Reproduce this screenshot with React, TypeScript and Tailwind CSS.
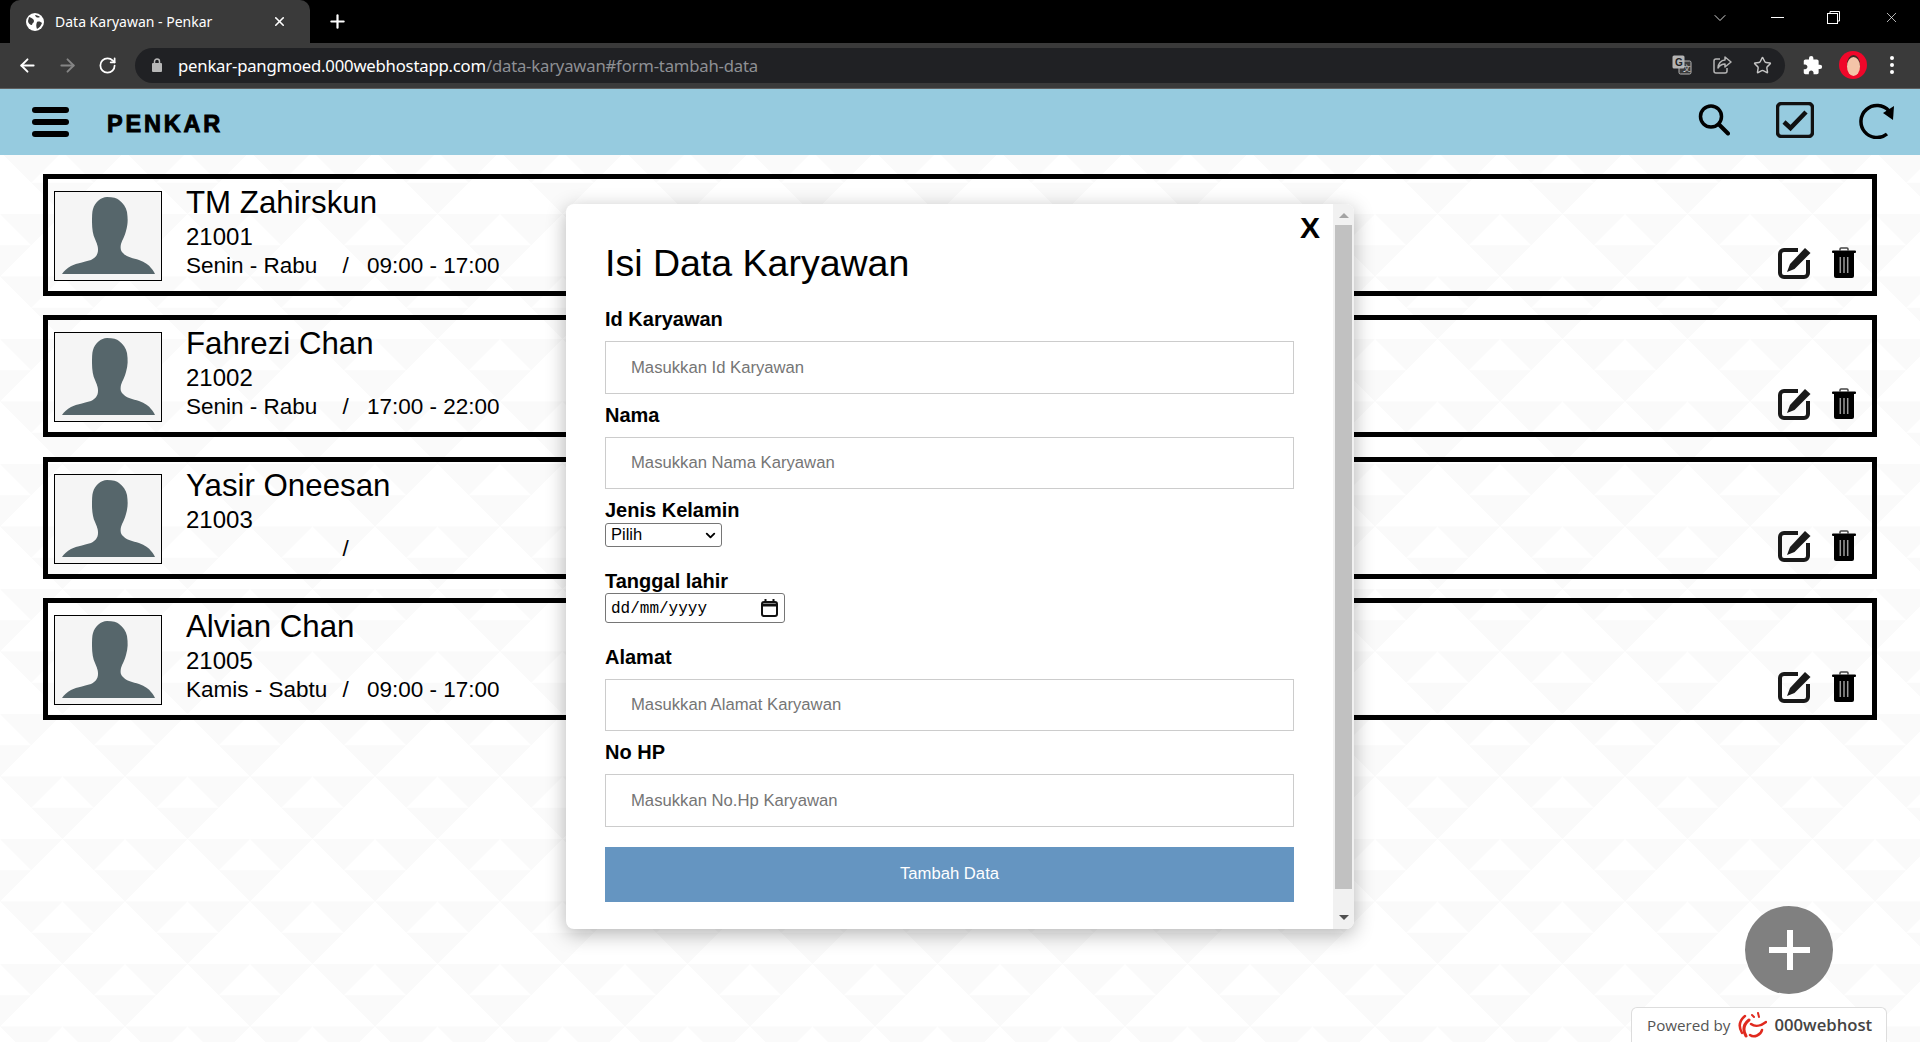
import { FC } from "react";
import { ArrowLeft, ArrowRight, ChevronDown, Plus, RotateCw, Star, X } from "lucide-react";
import { MdExtension } from "react-icons/md";

const employees = [
  { name: "TM Zahirskun", id: "21001", days: "Senin - Rabu", time: "09:00 - 17:00" },
  { name: "Fahrezi Chan", id: "21002", days: "Senin - Rabu", time: "17:00 - 22:00" },
  { name: "Yasir Oneesan", id: "21003", days: "", time: "" },
  { name: "Alvian Chan", id: "21005", days: "Kamis - Sabtu", time: "09:00 - 17:00" },
];

// background tile of pale triangles
const PagePattern = () => (
  <svg className="absolute inset-0 h-full w-full" aria-hidden="true">
    <defs>
      <pattern id="tri" x="0" y="89" width="125" height="125" patternUnits="userSpaceOnUse">
        <path
          fill="#fafafa"
          d="M0 62.5H62.5L31.25 93.75ZM62.5 62.5H125L93.75 93.75ZM31.25 93.75H93.75L62.5 125ZM0 0H62.5L31.25 31.25ZM62.5 0H125L93.75 31.25ZM93.75 31.25H156.25L125 62.5ZM-31.25 31.25H31.25L0 62.5Z"
        />
      </pattern>
    </defs>
    <rect width="100%" height="100%" fill="url(#tri)" />
  </svg>
);

const Silhouette = () => (
  <svg viewBox="0 0 106 88" className="h-full w-full">
    <path
      fill="#56666b"
      d="M52 5C58 5 62 6 64 8C68 11 71 15 72 20C73 27 73 32 71 39C70 44 67 48 66 52C65 57 66 59 68 61C71 65 78 66 84 68C90 70 94 73 96 76C98 78 99 80 100 82H7C9 79 12 76 16 74C22 71 30 70 36 68C40 66 43 63 43 58C43 54 42 52 40 47C38 43 37 37 37 30C37 25 37 20 38 17C40 10 46 5 52 5Z"
    />
  </svg>
);

const EditIcon = () => (
  <svg width="33" height="32" viewBox="0 0 33 32">
    <path
      d="M20 3H6A4 4 0 0 0 2 7V26A4 4 0 0 0 6 30H26A4 4 0 0 0 30 26V13"
      fill="none"
      stroke="#1a1a1a"
      strokeWidth="4"
    />
    <path d="M27 1L32.500 6L16.500 22L9 25L12 17Z" fill="#1a1a1a" />
  </svg>
);

const TrashIcon = () => (
  <svg width="24" height="32" viewBox="0 0 24 32">
    <path d="M8 3.500V2A1 1 0 0 1 9 1H15A1 1 0 0 1 16 2V3.500" fill="none" stroke="#444" strokeWidth="1.500" />
    <rect x="0" y="3.500" width="24" height="2.500" rx="1" fill="#000" />
    <path d="M2 6H22V29A2 2 0 0 1 20 31H4A2 2 0 0 1 2 29Z" fill="#000" />
    <path d="M8.300 10V26M12 10V26M15.700 10V26" stroke="#9a9a9a" strokeWidth="1.500" />
  </svg>
);

const EmployeeCard: FC<(typeof employees)[number]> = ({ name, id, days, time }) => (
  <div className="flex h-[122px] border-[5px] border-black pl-[6px] pt-[12px]">
    <div className="h-[90px] w-[108px] shrink-0 border border-black bg-[#f5f5f5]">
      <Silhouette />
    </div>
    <div className="ml-[24px] -mt-[12px] flex flex-col pt-[5px] text-black">
      <div className="text-[31.25px] leading-[38px]">{name}</div>
      <div className="text-[24px] leading-[28px] mt-[1px]">{id}</div>
      <div className="flex text-[22.5px] leading-[28px] mt-[1px]">
        <span className="w-[156.5px]">{days}</span>
        <span className="w-[24.5px]">/</span>
        <span>{time}</span>
      </div>
    </div>
    <div className="ml-auto mr-[16px] mt-[56px] flex items-start gap-[21px]">
      <EditIcon />
      <TrashIcon />
    </div>
  </div>
);

const TextField: FC<{ label: string; placeholder: string; top: string; height: string }> = ({
  label,
  placeholder,
  top,
  height,
}) => (
  <>
    <label className={`block h-[24px] text-[20px] font-bold leading-[24px] text-black ${top}`}>{label}</label>
    <input
      placeholder={placeholder}
      className={`mt-[10px] block w-[689px] border border-[#ccc] bg-white pl-[25px] text-[16.67px] text-black placeholder:text-[#757575] ${height}`}
    />
  </>
);

const FormModal = () => (
  <div className="absolute left-[566px] top-[204px] flex h-[725px] w-[788px] overflow-hidden rounded-[8px] bg-white shadow-[0_5px_20px_rgba(0,0,0,0.3)]">
    <div className="relative flex-1 pl-[39px] pt-[37px]">
      <span className="absolute right-[13px] top-[5px] text-[30px] font-bold leading-[38px] text-black">X</span>
      <h2 className="h-[44px] text-[37.5px] leading-[44px] text-black">Isi Data Karyawan</h2>
      <TextField label="Id Karyawan" placeholder="Masukkan Id Karyawan" top="mt-[22px]" height="h-[53px]" />
      <TextField label="Nama" placeholder="Masukkan Nama Karyawan" top="mt-[9px]" height="h-[52px]" />
      <label className="mt-[9px] block h-[24px] text-[20px] font-bold leading-[24px] text-black">Jenis Kelamin</label>
      <div className="relative mt-[1px] h-[24px] w-[117px]">
        <select className="block h-[24px] w-full appearance-none rounded-[3px] border border-[#767676] bg-white pb-[2px] pl-[5px] text-[16.5px] leading-[20px] text-black">
          <option>Pilih</option>
        </select>
        <ChevronDown size={15} strokeWidth={3} className="pointer-events-none absolute right-[4px] top-[5px] text-black" />
      </div>
      <label className="mt-[22px] block h-[24px] text-[20px] font-bold leading-[24px] text-black">Tanggal lahir</label>
      <div className="flex h-[30px] w-[180px] items-center justify-between rounded-[3px] border border-[#767676] pl-[5px] pr-[6px]">
        <span className="pt-[2px] font-['Liberation_Mono',monospace] text-[16px] text-black">dd/mm/yyyy</span>
        <svg width="17" height="18" viewBox="0 0 17 18">
          <rect x="1" y="3" width="15" height="14" rx="2" fill="none" stroke="#111" strokeWidth="2" />
          <path d="M1 6H16" stroke="#111" strokeWidth="3" />
          <path d="M4.500 0V3M12.500 0V3" stroke="#111" strokeWidth="2" />
        </svg>
      </div>
      <TextField label="Alamat" placeholder="Masukkan Alamat Karyawan" top="mt-[22px]" height="h-[52px]" />
      <TextField label="No HP" placeholder="Masukkan No.Hp Karyawan" top="mt-[9px]" height="h-[53px]" />
      <button className="mt-[20px] block h-[55px] w-[689px] bg-[#6595c1] pb-[2px] text-[16.67px] text-white">Tambah Data</button>
    </div>
    {/* scrollbar */}
    <div className="flex w-[21px] shrink-0 flex-col items-center bg-[#f1f1f1]">
      <div className="flex h-[21px] w-full items-center justify-center pt-[2px]">
        <div className="h-0 w-0 border-x-[5px] border-b-[5px] border-x-transparent border-b-[#a3a3a3]" />
      </div>
      <div className="h-[664px] w-[17px] bg-[#c1c1c1]" />
      <div className="flex flex-1 items-center justify-center pt-[17px]">
        <div className="h-0 w-0 border-x-[5px] border-t-[5px] border-x-transparent border-t-[#505050]" />
      </div>
    </div>
  </div>
);

const WebhostLogo = () => (
  <svg width="30" height="26" viewBox="0 0 30 26" fill="none" stroke="#e02a1f" strokeLinecap="round">
    <path d="M5 21C1 14 3 8 8 4" strokeWidth="2.500" />
    <path d="M9 24C5 17 7 12 12 8" strokeWidth="3" />
    <path d="M13 23C17 26 24 23 25 18" strokeWidth="2.500" />
    <path d="M14 12C18 15 24 14 29 10" strokeWidth="2.500" />
    <path d="M15 3L17 5M21 1L22 5" strokeWidth="2" />
  </svg>
);

const BrowserChrome = () => (
  <>
    <div className="relative flex h-[43px] items-end bg-black pl-[10px] font-['Noto_Sans',sans-serif] text-white">
      <div className="flex h-[43px] w-[300px] items-center rounded-t-[10px] bg-[#3a3a3a] pl-[16px]">
        <svg width="18" height="18" viewBox="0 0 18 18">
          <circle cx="9" cy="9" r="9" fill="#fff" />
          <path d="M3 4C6 5 8 6 8 8C8 10 6 10 6 12C4 12 2 10 2 8ZM11 9C13 8 15 9 16 10C15 13 13 15 11 16C10 14 10 11 11 9ZM9 2C11 2 13 3 14 4C12 5 10 5 9 2Z" fill="#3a3a3a" />
        </svg>
        <span className="ml-[11px] w-[217px] text-[14px] leading-none">Data Karyawan - Penkar</span>
        <X size={15} strokeWidth={2.500} />
      </div>
      <Plus size={21} strokeWidth={2.500} className="mb-[11px] ml-[17px]" />
      <div className="ml-auto mb-[11px] flex h-[29px] items-center">
        <ChevronDown size={20} strokeWidth={1} className="mr-[41px]" />
        <div className="mr-[43px] h-px w-[13px] bg-white" />
        <svg width="13" height="13" viewBox="0 0 13 13" fill="none" stroke="#fff" className="mr-[43px]">
          <rect x="0.500" y="2.500" width="10" height="10" />
          <path d="M3 2.500V0.500H12.500V10H10.500" />
        </svg>
        <X size={17} strokeWidth={1} className="mr-[20px]" />
      </div>
    </div>
    <div className="relative flex h-[46px] items-center border-b border-[#5f5f5f] bg-[#3a3a3a] pb-[1px] text-white">
      <ArrowLeft size={21} strokeWidth={2.200} className="ml-[17px]" />
      <ArrowRight size={21} strokeWidth={2.200} className="ml-[19px] text-[#858585]" />
      <RotateCw size={19} strokeWidth={2.200} className="ml-[20px]" />
      <div className="ml-[18px] flex h-[35px] w-[1650px] items-center rounded-full bg-[#202124] pl-[17px] font-['Noto_Sans',sans-serif]">
        <svg width="10" height="14" viewBox="0 0 10 14" fill="#b8b8b8">
          <rect y="5" width="10" height="9" rx="1" />
          <path d="M2.500 5V3.500a2.500 2.500 0 0 1 5 0V5" fill="none" stroke="#b8b8b8" strokeWidth="1.500" />
        </svg>
        <span className="ml-[16px] pt-[2px] text-[16.700px] leading-none tracking-[-0.2px]">
          penkar-pangmoed.000webhostapp.com<span className="text-[#8e9094]">/data-karyawan#form-tambah-data</span>
        </span>
        <div className="ml-auto flex items-center">
          <svg width="20" height="20" viewBox="0 0 20 20" className="mr-[21px]">
            <rect x="7" y="6" width="12" height="13" rx="1.500" fill="#3a3a3a" stroke="#b5b5b5" />
            <rect x="0.500" y="0.500" width="12" height="13" rx="1.500" fill="#b5b5b5" />
            <text x="3" y="11" fontSize="10" fontWeight="700" fill="#202124" fontFamily="Liberation Sans">G</text>
            <text x="11" y="16" fontSize="8" fill="#d5d5d5" fontFamily="Liberation Sans">文</text>
          </svg>
          <svg width="19" height="18" viewBox="0 0 19 18" fill="none" stroke="#b5b5b5" strokeWidth="1.500" strokeLinejoin="round" className="mr-[21px]">
            <path d="M7 3H3A2 2 0 0 0 1 5V15A2 2 0 0 0 3 17H12A2 2 0 0 0 14 15V12" />
            <path d="M12 1L18 6L12 11V8C9 8 7 9 5 12C5 8 8 4 12 4Z" />
          </svg>
          <Star size={19} strokeWidth={1.800} className="mr-[13px] text-[#c5c5c5]" />
        </div>
      </div>
      <MdExtension size={21} className="ml-[17px]" />
      <div className="relative ml-[16px] flex h-[28px] w-[28px] items-start justify-center overflow-hidden rounded-full bg-[#f0072a] pt-[6px]">
        <div className="h-[19px] w-[13px] rounded-[50%] bg-[#f4c4a8] shadow-[0_-2px_0_#3a2a24]" />
      </div>
      <div className="ml-[23px] flex flex-col gap-[3px]">
        <div className="h-[4px] w-[4px] rounded-full bg-white" />
        <div className="h-[4px] w-[4px] rounded-full bg-white" />
        <div className="h-[4px] w-[4px] rounded-full bg-white" />
      </div>
    </div>
  </>
);

const App = () => {
  return (
    <div className="relative h-[1042px] w-[1920px] overflow-hidden bg-white font-['Liberation_Sans',Arial,sans-serif]">
      <PagePattern />
      <BrowserChrome />

      <header className="relative flex h-[66px] items-center bg-[#96cbdf] pl-[32px] text-black">
        <div className="flex w-[37px] flex-col gap-[6px]">
          <div className="h-[6px] rounded-full bg-black" />
          <div className="h-[6px] rounded-full bg-black" />
          <div className="h-[6px] rounded-full bg-black" />
        </div>
        <span className="ml-[38px] mt-[6px] text-[23.500px] font-bold leading-none tracking-[2.800px] [-webkit-text-stroke:0.9px_black]">
          PENKAR
        </span>
        <div className="ml-auto mr-[24px] -mt-[4px] flex items-center">
          <svg width="32" height="32" viewBox="0 0 32 32" fill="none" stroke="#000" className="mr-[46px]">
            <circle cx="13" cy="12.500" r="10.500" strokeWidth="3.500" />
            <path d="M21 20.500L30 29.500" strokeWidth="4" strokeLinecap="round" />
          </svg>
          <svg width="38" height="36" viewBox="0 0 38 36" fill="none" stroke="#111" className="mr-[44px]">
            <rect x="1.500" y="1.500" width="35" height="33" rx="4" strokeWidth="3.500" />
            <path d="M8 20L14.500 26L30 10" strokeWidth="4.500" />
          </svg>
          <svg width="38" height="38" viewBox="0 0 38 38" fill="none" stroke="#000">
            <path d="M29 33A16 16 0 1 1 31 10" strokeWidth="3.500" />
            <path d="M36 5L35 19L25 12Z" fill="#000" stroke="none" />
          </svg>
        </div>
      </header>

      <main className="relative flex flex-col gap-[19.3px] px-[43px] pt-[19px]">
        {employees.map((employee) => (
          <EmployeeCard key={employee.id} {...employee} />
        ))}
      </main>

      <FormModal />

      <button className="absolute left-[1745px] top-[906px] flex h-[88px] w-[88px] items-center justify-center rounded-full bg-[#808080]">
        <span className="relative h-[40px] w-[41px]">
          <span className="absolute left-[18px] top-0 h-[40px] w-[6px] bg-white" />
          <span className="absolute left-0 top-[17px] h-[6px] w-[41px] bg-white" />
        </span>
      </button>

      <div className="absolute left-[1631px] top-[1007px] flex h-[35px] w-[256px] items-center rounded-t-[6px] border border-b-0 border-[#ddd] bg-white pl-[15px] font-['Open_Sans',sans-serif] text-[#555]">
        <span className="text-[15.200px]">Powered by</span>
        <span className="ml-[7px]">
          <WebhostLogo />
        </span>
        <span className="ml-[7px] text-[16.700px] font-semibold text-[#444]">000webhost</span>
      </div>
    </div>
  );
};

export default App;
